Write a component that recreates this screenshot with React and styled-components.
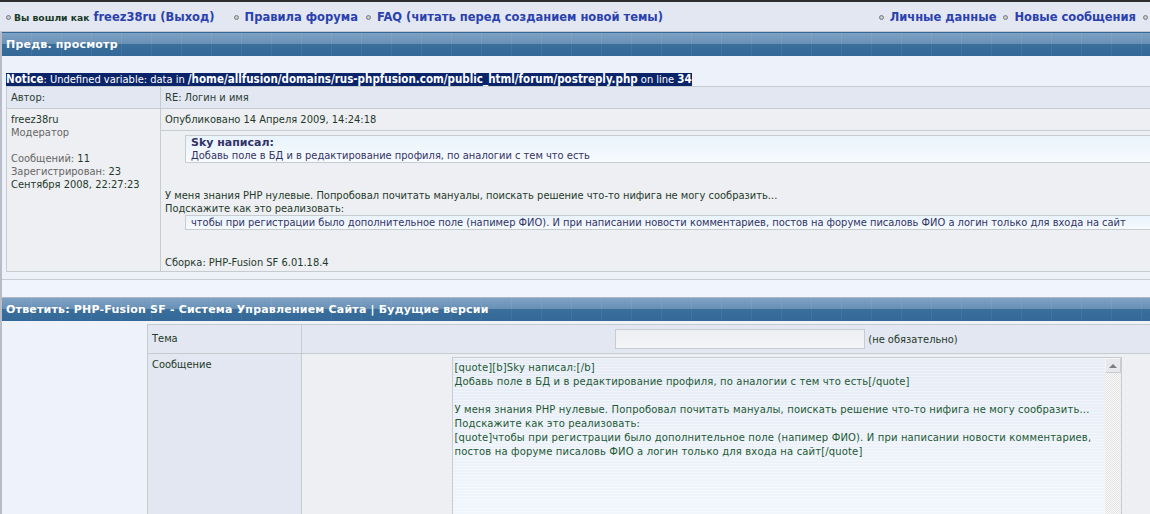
import React from "react";
import styled, { createGlobalStyle } from "styled-components";

const GlobalStyle = createGlobalStyle`
  html, body {
    margin: 0;
    padding: 0;
    overflow: hidden;
    background: #edf1f9;
  }
  body {
    font-family: "DejaVu Sans Condensed", "DejaVu Sans", sans-serif;
    font-size: 11px;
    color: #1f3a2a;
  }
`;

const borderColor = "#c5cdd1";

const TopStrip = styled.div`
  height: 2px;
  background: #2d2d2d;
`;

const NavBar = styled.div`
  width: 1150px;
  box-sizing: border-box;
  height: 30px;
  display: flex;
  align-items: center;
  padding: 1px 2px 0 6px;
  background: #e3e7f2;
  border-bottom: 1px solid #c2c6cf;
  white-space: nowrap;
`;

const NavGroup = styled.div`
  display: flex;
  align-items: center;
  margin-left: ${(p) => (p.right ? "auto" : "0")};
`;

const Bullet = styled.span`
  display: inline-block;
  width: 3px;
  height: 3px;
  border-radius: 50%;
  background: #c9c9c9;
  border: 1px solid #777b82;
  margin: 0 ${(p) => (p.last ? 0 : p.tight ? 3 : 6)}px 0 ${(p) => p.gap || 0}px;
`;

const Greeting = styled.span`
  font: bold 9.2px "DejaVu Sans", sans-serif;
  color: #1a3a28;
  margin-right: 4px;
`;

const NavLink = styled.a`
  font: bold 11.5px "DejaVu Sans", sans-serif;
  color: #2a41ad;
  text-decoration: none;
`;

const Main = styled.div`
  width: 1290px;
  border-left: 2px solid #b7bcc7;
`;

const CapBar = styled.div`
  height: 23px;
  padding-left: 4px;
  color: #fff;
  font: bold 11px "DejaVu Sans", sans-serif;
  line-height: 24px;
  letter-spacing: 0.2px;
  border-top: 1px solid ${(p) => (p.edge ? "#b0b8c4" : "transparent")};
  background:
    repeating-linear-gradient(90deg, rgba(255, 255, 255, 0) 0 29px, rgba(255, 255, 255, 0.06) 29px 30px),
    linear-gradient(#7ea2c4 0%, #6890b5 48%, #3a6e9b 50%, #336898 100%);
`;

const Preview = styled.div`
  padding: 17px 0 7px 4px;
  background: #edf1f9;
  border-bottom: 1px solid ${borderColor};
`;

const Notice = styled.div`
  display: table;
  background: #0a246a;
  color: #fff;
  font: 11px "DejaVu Sans Condensed", "DejaVu Sans", sans-serif;
  line-height: 13px;
  b {
    font-size: 11.5px;
  }
`;

const Table = styled.table`
  border-collapse: collapse;
  width: ${(p) => p.w}px;
  td {
    border: 1px solid ${borderColor};
    vertical-align: top;
    padding: 0;
  }
`;

const HeadCell = styled.td`
  background: #e2e7f1;
  height: 21px;
  line-height: 21px;
  padding: 0 4px !important;
  color: #2c3d33;
  width: ${(p) => (p.w ? p.w + "px" : "auto")};
`;

const AuthorCell = styled.td`
  background: #eeeff3;
  padding: 4px 4px 0 4px !important;
  line-height: 13px;
`;

const Muted = styled.span`
  color: #666;
`;

const PostCell = styled.td`
  background: #eeeff3;
`;

const PostMeta = styled.div`
  height: 21px;
  line-height: 21px;
  padding-left: 4px;
  border-bottom: 1px solid ${borderColor};
`;

const PostBody = styled.div`
  padding: 4px 0 2px 4px;
  line-height: 13px;
`;

const Quote = styled.div`
  margin-left: 20px;
  padding: 0 5px;
  border: 1px solid ${borderColor};
  border-right: none;
  color: #333366;
  background: linear-gradient(#e9f3fc, #f6fbfe);
  b {
    font-family: "DejaVu Sans", sans-serif;
  }
`;

const Reply = styled.div`
  padding-top: 17px;
  background: #f0f4fc;
`;

const FormArea = styled.div`
  padding: 3px 0 0 145px;
  background: #eef2fa;
`;

const Label = styled.td`
  width: 145px;
  background: #e2e7f1;
  padding: ${(p) => (p.tall ? "4px" : "0")} 4px 0 4px !important;
  line-height: ${(p) => (p.tall ? "13px" : "28px")};
  height: ${(p) => (p.tall ? "auto" : "28px")};
`;

const Field = styled.td`
  background: ${(p) => (p.alt ? "#eeeff3" : "#e2e7f1")};
  text-align: center;
  vertical-align: middle !important;
  padding: ${(p) => (p.alt ? "3px 0 0" : "0")} !important;
`;

const TextInput = styled.span`
  display: inline-block;
  width: 248px;
  height: 18px;
  border: 1px solid ${borderColor};
  background: linear-gradient(#eceef2, #f4f5f8);
  vertical-align: middle;
`;

const Hint = styled.span`
  vertical-align: middle;
  margin-left: 3px;
`;

const TextBox = styled.div`
  display: inline-flex;
  width: 668px;
  height: 160px;
  border: 1px solid ${borderColor};
  text-align: left;
  vertical-align: top;
  background:
    repeating-linear-gradient(rgba(255, 255, 255, 0.35) 0 1px, rgba(255, 255, 255, 0) 1px 3px),
    linear-gradient(#e6ecf6, #f1f6fd);
`;

const TextContent = styled.div`
  flex: 1;
  padding: 3px 2px;
  font: 10px "DejaVu Sans", sans-serif;
  letter-spacing: 0.15px;
  line-height: 14px;
  color: #1d5932;
  white-space: pre-wrap;
`;

const Scroll = styled.div`
  width: 16px;
  display: flex;
  flex-direction: column;
  background: repeating-conic-gradient(#e4e4e4 0 25%, #f8f8f8 0 50%) 0 0 / 2px 2px;
`;

const ScrollBtn = styled.div`
  height: 15px;
  background: #e6e8ec;
  border: 1px solid #f4f5f7;
  border-right-color: #c8ccd2;
  border-bottom-color: #c8ccd2;
  box-sizing: border-box;
  display: flex;
  align-items: center;
  justify-content: center;
`;

const Arrow = styled.span`
  width: 0;
  height: 0;
  border-left: 4px solid transparent;
  border-right: 4px solid transparent;
  border-bottom: 4px solid #7a7d84;
`;

const message = `[quote][b]Sky написал:[/b]
Добавь поле в БД и в редактирование профиля, по аналогии с тем что есть[/quote]

У меня знания PHP нулевые. Попробовал почитать мануалы, поискать решение что-то нифига не могу сообразить...
Подскажите как это реализовать:
[quote]чтобы при регистрации было дополнительное поле (напимер ФИО). И при написании новости комментариев, постов на форуме писаловь ФИО а логин только для входа на сайт[/quote]`;

export default function App() {
  return (
    <>
      <GlobalStyle />
      <TopStrip />
      <NavBar>
        <NavGroup>
          <Bullet tight />
          <Greeting>Вы вошли как</Greeting>
          <NavLink href="#">freez38ru (Выход)</NavLink>
          <Bullet gap={19} />
          <NavLink href="#">Правила форума</NavLink>
          <Bullet gap={8} />
          <NavLink href="#">FAQ (читать перед созданием новой темы)</NavLink>
        </NavGroup>
        <NavGroup right>
          <Bullet />
          <NavLink href="#">Личные данные</NavLink>
          <Bullet gap={7} />
          <NavLink href="#">Новые сообщения</NavLink>
          <Bullet gap={7} last />
        </NavGroup>
      </NavBar>
      <Main>
        <CapBar>Предв. просмотр</CapBar>
        <Preview>
          <Notice>
            <b>Notice</b>: Undefined variable: data in{" "}
            <b>/home/allfusion/domains/rus-phpfusion.com/public_html/forum/postreply.php</b> on line <b>34</b>
          </Notice>
          <Table w={1280}>
            <tbody>
              <tr>
                <HeadCell w={145}>Автор:</HeadCell>
                <HeadCell>RE: Логин и имя</HeadCell>
              </tr>
              <tr>
                <AuthorCell>
                  freez38ru
                  <br />
                  <Muted>Модератор</Muted>
                  <br />
                  <br />
                  <Muted>Сообщений: </Muted>11
                  <br />
                  <Muted>Зарегистрирован: </Muted>23 Сентября 2008, 22:27:23
                </AuthorCell>
                <PostCell>
                  <PostMeta>Опубликовано 14 Апреля 2009, 14:24:18</PostMeta>
                  <PostBody>
                    <Quote>
                      <b>Sky написал:</b>
                      <br />
                      Добавь поле в БД и в редактирование профиля, по аналогии с тем что есть
                    </Quote>
                    <br />
                    <br />
                    У меня знания PHP нулевые. Попробовал почитать мануалы, поискать решение что-то нифига не могу сообразить...
                    <br />
                    Подскажите как это реализовать:
                    <Quote>
                      чтобы при регистрации было дополнительное поле (напимер ФИО). И при написании новости комментариев, постов на форуме писаловь ФИО а логин только для входа на сайт
                    </Quote>
                    <br />
                    <br />
                    Сборка: PHP-Fusion SF 6.01.18.4
                  </PostBody>
                </PostCell>
              </tr>
            </tbody>
          </Table>
        </Preview>
        <Reply>
          <CapBar edge>Ответить: PHP-Fusion SF - Система Управлением Сайта | Будущие версии</CapBar>
          <FormArea>
            <Table w={1125}>
              <tbody>
                <tr>
                  <Label>Тема</Label>
                  <Field>
                    <TextInput />
                    <Hint>(не обязательно)</Hint>
                  </Field>
                </tr>
                <tr>
                  <Label tall>Сообщение</Label>
                  <Field alt>
                    <TextBox>
                      <TextContent>{message}</TextContent>
                      <Scroll>
                        <ScrollBtn>
                          <Arrow />
                        </ScrollBtn>
                      </Scroll>
                    </TextBox>
                  </Field>
                </tr>
              </tbody>
            </Table>
          </FormArea>
        </Reply>
      </Main>
    </>
  );
}
